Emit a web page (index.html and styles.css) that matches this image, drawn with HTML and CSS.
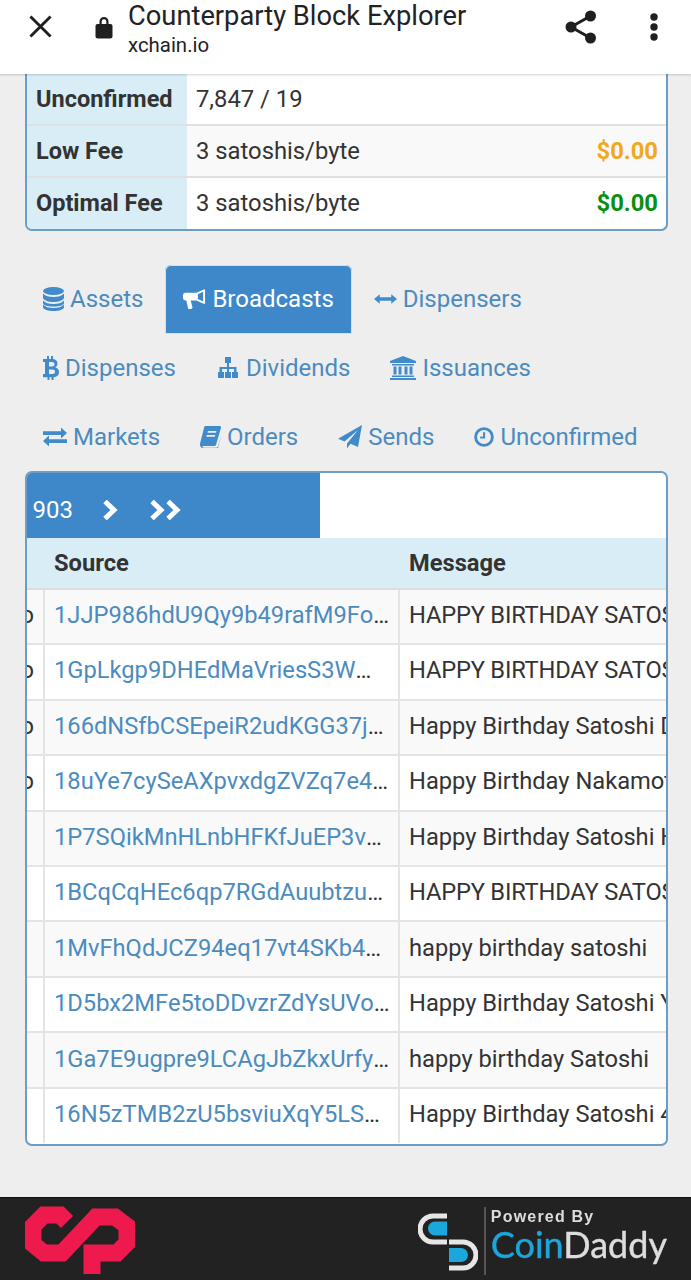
FILE: index.html
```html
<!DOCTYPE html>
<html lang="en">
<head>
<meta charset="utf-8">
<title>Counterparty Block Explorer</title>
<link rel="stylesheet" href="styles.css">
</head>
<body>
<header class="topbar">
  <svg class="ic-close" viewBox="0 0 24 24"><path d="M1.500 1.500 22.500 22.500M22.500 1.500 1.500 22.500"/></svg>
  <svg class="ic-lock" viewBox="0 0 18 24"><path d="M4.500 9V6.500a4.500 4.500 0 0 1 9 0V9h2a2 2 0 0 1 2 2v10a2.500 2.500 0 0 1-2.500 2.500H3A2.500 2.500 0 0 1 .5 21V11a2 2 0 0 1 2-2zm2.200 0h4.600V6.500a2.300 2.300 0 0 0-4.600 0z"/></svg>
  <div class="titles">
    <div class="title">Counterparty Block Explorer</div>
    <div class="subtitle">xchain.io</div>
  </div>
  <svg class="ic-share" viewBox="0 0 32 34"><path class="ln" d="M25.500 6 6 17l19.500 11"/><circle cx="25.500" cy="6" r="5.500"/><circle cx="6" cy="17" r="5.500"/><circle cx="25.500" cy="28" r="5.500"/></svg>
  <svg class="ic-dots" viewBox="0 0 8 28"><circle cx="4" cy="4" r="3.700"/><circle cx="4" cy="14" r="3.700"/><circle cx="4" cy="24" r="3.700"/></svg>
</header>

<main class="main">
  <section class="panel stats">
    <div class="stat"><div class="stat-k">Unconfirmed</div><div class="stat-v">7,847 / 19</div></div>
    <div class="stat stat-alt"><div class="stat-k">Low Fee</div><div class="stat-v">3 satoshis/byte<b class="fee fee-low">$0.00</b></div></div>
    <div class="stat"><div class="stat-k">Optimal Fee</div><div class="stat-v">3 satoshis/byte<b class="fee fee-opt">$0.00</b></div></div>
  </section>

  <nav class="tabs">
    <a class="tab"><svg class="ti" style="width:21px" viewBox="0 0 21 24"><ellipse cx="10.500" cy="4" rx="10.500" ry="4"/><path d="M0 6.500C2 9 6 10 10.500 10S19 9 21 6.500V11c-1 2.500-5.500 4-10.500 4S1 13.500 0 11zM0 13.500C2 16 6 17 10.500 17S19 16 21 13.500V16c0 2.500-5 3.500-10.500 3.500S0 18.500 0 16z"/><path d="M0 17.500C2 20 6 21 10.500 21S19 20 21 17.500V20c0 2.500-5 4-10.500 4S0 22.500 0 20z"/></svg>Assets</a>
    <a class="tab active"><svg class="ti" style="width:23px" viewBox="0 0 24 24"><path d="M23 2v15h-1.500L14 13.500H8l2 7.500-1.500 1.500H5.500L3.500 13.500H2.500a2.500 2.500 0 0 1-2.500-2.500V8a2.500 2.500 0 0 1 2.500-2.500H14L21.500 2zM15.500 7v5l5.500 2.500V4.500z" fill-rule="evenodd"/></svg>Broadcasts</a>
    <a class="tab"><svg class="ti" style="width:23px" viewBox="0 0 24 24"><path d="M0 12 6 7v3.300h12V7l6 5-6 5v-3.300H6V17z"/></svg>Dispensers</a>
    <a class="tab"><svg class="ti" style="width:16px" viewBox="0 0 16 24"><path fill-rule="evenodd" d="M4 0h2v3h2V0h2v3c3 .3 4.500 2 4.500 4.500 0 2-1 3.300-2.300 3.800C14.500 12 16 13.500 16 16c0 3-2 5-5.500 5.200V24h-2v-2.800h-2V24h-2v-2.800H0V18h2V6H0V3h4zM6 6v4.500h3c1.500 0 2.500-1 2.500-2.300S10.500 6 9 6zm0 7.500V18h3.500c1.600 0 2.500-1 2.500-2.300s-1-2.200-2.500-2.200z"/></svg>Dispenses</a>
    <a class="tab"><svg class="ti" style="width:24px" viewBox="0 0 24 24"><path d="M9 1h6v6h-2v4h7.500v5H22v6h-6v-6h2v-3h-5v3h2v6H9v-6h2v-3H6v3h2v6H2v-6h1.500v-5H11V7H9z"/></svg>Dividends</a>
    <a class="tab"><svg class="ti" style="width:26px" viewBox="0 0 26 24"><path d="M13 0 26 5v2H0V5zM2 8h22v1.500H2zM3.500 10.500h3v8h-3zM8.500 10.500h3v8h-3zM14.500 10.500h3v8h-3zM19.500 10.500h3v8h-3zM2 19.500h22V21H2zM0 22h26v2H0z"/></svg>Issuances</a>
    <a class="tab"><svg class="ti" style="width:24px" viewBox="0 0 24 24"><path d="M0 6.200h18V2.500L24 8l-6 5.500V10H0zM24 14.200H6v-3.700L0 16l6 5.500V18h18z"/></svg>Markets</a>
    <a class="tab"><svg class="ti" style="width:21px" viewBox="0 0 21 24"><path fill-rule="evenodd" d="M5 1h15c1 0 1.300.8 1 1.800l-4.800 16.400c-.4 1.300-1 1.800-2.500 1.800H3.500c-.8 0-1.200.5-1 1 .2.500.7.800 1.500.8h12.500c.8 0 1.200-.4 1.500-1.200L22 7l-4 16H3C1 23 0 21.500 0 19.500 0 19 .1 18 .3 17.500L4 3c.2-1 .5-2 1-2zM8 6l-.5 1.800h8.500L16.500 6zM6.800 10l-.5 1.800h8.500l.5-1.800z"/></svg>Orders</a>
    <a class="tab"><svg class="ti" style="width:24px" viewBox="0 0 24 24"><path d="M24 0 20 22l-7.500-3.300L9 23.500V18.500L20 5 6.500 16.500 0 13.800z"/></svg>Sends</a>
    <a class="tab"><svg class="ti" style="width:20px" viewBox="0 0 21 24"><circle cx="10.500" cy="12" r="8.800" fill="none" stroke="currentColor" stroke-width="3"/><path d="M9.500 7h2.200v6.500H6.500v-2h3z"/></svg>Unconfirmed</a>
  </nav>

  <section class="panel txs">
    <div class="scroller">
      <div class="pager">
        <span>of 903</span>
        <svg class="chev" viewBox="0 0 16 20"><path d="M3 1.500l9 8.500-9 8.500"/></svg>
        <svg class="chev2" viewBox="0 0 32 20"><path d="M3 1.500l9 8.500-9 8.500M19 1.500l9 8.500-9 8.500"/></svg>
      </div>
      <table class="grid">
        <thead><tr><th></th><th>Source</th><th>Message</th></tr></thead>
        <tbody>
          <tr><td class="c0">no</td><td class="src"><a>1JJP986hdU9Qy9b49rafM9FoWmQPqCnNxr</a></td><td class="caps">HAPPY BIRTHDAY SATOSHI</td></tr>
          <tr><td class="c0">no</td><td class="src"><a>1GpLkgp9DHEdMaVriesS3WmKqPbNzTeRty</a></td><td class="caps">HAPPY BIRTHDAY SATOSHI</td></tr>
          <tr><td class="c0">no</td><td class="src"><a>166dNSfbCSEpeiR2udKGG37jHkTnWqLmXz</a></td><td>Happy Birthday Satoshi Dear</td></tr>
          <tr><td class="c0">no</td><td class="src"><a>18uYe7cySeAXpvxdgZVZq7e4KwPmNbTrQs</a></td><td>Happy Birthday Nakamoto</td></tr>
          <tr><td class="c0"></td><td class="src"><a>1P7SQikMnHLnbHFKfJuEP3vWqTzYdGmRcx</a></td><td>Happy Birthday Satoshi Hi</td></tr>
          <tr><td class="c0"></td><td class="src"><a>1BCqCqHEc6qp7RGdAuubtzuMnKwVxLpYfT</a></td><td class="caps">HAPPY BIRTHDAY SATOSHI</td></tr>
          <tr><td class="c0"></td><td class="src"><a>1MvFhQdJCZ94eq17vt4SKb4NpRwTyXmLcG</a></td><td>happy birthday satoshi</td></tr>
          <tr><td class="c0"></td><td class="src"><a>1D5bx2MFe5toDDvzrZdYsUVoKpQwTnLmHc</a></td><td>Happy Birthday Satoshi Yes</td></tr>
          <tr><td class="c0"></td><td class="src"><a>1Ga7E9ugpre9LCAgJbZkxUrfyWnTqPmRdK</a></td><td>happy birthday Satoshi</td></tr>
          <tr><td class="c0"></td><td class="src"><a>16N5zTMB2zU5bsviuXqY5LSKfWdPnGmRtH</a></td><td>Happy Birthday Satoshi 40</td></tr>
        </tbody>
      </table>
    </div>
  </section>
</main>

<footer class="footer">
  <svg class="logo-cp" viewBox="0 0 110 68"><path d="M42 16 35 9H19L8 20V38L19 47H37L71 11H90L102 20V37L92 47H67V68"/></svg>
  <div class="logo-cd">
    <svg class="cd-mark" viewBox="0 0 60 58"><path class="cd-w" d="M29 3H15a13 13 0 0 0 0 26h14M31 29h14a13 13 0 0 1 0 26H31"/><path class="cd-b" d="M10 15.500a7 7 0 0 1 7-7h12v14H17a7 7 0 0 1-7-7zM31 35h12a7 7 0 0 1 0 14H31z"/></svg>
    <span class="cd-bar"></span>
    <div class="cd-text">
      <div class="cd-pow">Powered By</div>
      <div class="cd-name"><span class="cd-coin">Coin</span>Daddy</div>
    </div>
  </div>
</footer>
</body>
</html>
```
FILE: styles.css
```css
* { box-sizing: border-box; }
html, body { margin: 0; padding: 0; }
body {
  width: 691px;
  height: 1280px;
  overflow: hidden;
  display: flex;
  flex-direction: column;
  background: #eee;
  color: #333;
  font-family: Roboto, "Liberation Sans", sans-serif;
  font-size: 24px;
}

/* top browser bar */
.topbar {
  flex: none;
  height: 74px;
  background: #fff;
  display: flex;
  align-items: center;
  padding: 0 0 22px 29px;
  box-shadow: 0 1px 2px rgba(0,0,0,.18);
  position: relative;
  z-index: 2;
}
.ic-close { width: 23px; height: 23px; fill: none; stroke: #1f1f1f; stroke-width: 3; margin-right: 43px; margin-top: 1px; }
.ic-lock { width: 18px; height: 24px; fill: #1f1f1f; margin-right: 15px; margin-top: 1px; }
.titles { flex: 1; color: #222; margin-top: 6px; }
.title { font-size: 27.300px; line-height: 30px; height: 31px; }
.subtitle { font-size: 20.400px; line-height: 26px; }
.ic-share { width: 32px; height: 34px; fill: #1f1f1f; margin-right: 53px; margin-top: 1px; }
.ic-share .ln { fill: none; stroke: #1f1f1f; stroke-width: 3; }
.ic-dots { width: 8px; height: 28px; fill: #1f1f1f; margin-right: 33px; margin-top: 1px; }

.main { flex: 1; padding: 0 23px 0 25px; }

.panel {
  background: #fff;
  border: 2px solid #6c9dc2;
  border-radius: 7px;
}

/* stats table */
.stats {
  height: 157px;
  border-top: 0;
  border-top-left-radius: 0;
  border-top-right-radius: 0;
  margin-bottom: 34px;
  overflow: hidden;
}
.stat { display: flex; height: 52px; border-bottom: 2px solid #e0e0e0; }
.stat:last-child { border-bottom: 0; }
.stat-alt { background: #f9f9f9; }
.stat-k {
  width: 160px;
  flex: none;
  background: #d9edf7;
  font-weight: 700;
  font-size: 23.500px;
  padding-left: 9px;
  line-height: 50px;
  color: #333;
}
.stat-v { flex: 1; padding: 0 8px 0 9px; line-height: 50px; display: flex; justify-content: space-between; font-size: 23.800px; }
.fee { font-weight: 700; }
.fee-low { color: #f0a81e; }
.fee-opt { color: #0a8f10; }

/* tabs */
.tabs { display: flex; flex-wrap: wrap; height: 206px; }
.tab {
  height: 68.670px;
  display: flex;
  align-items: center;
  padding: 0 18px;
  margin-right: 4px;
  color: #4b8bbe;
  white-space: nowrap;
  border-radius: 6px 6px 0 0;
}
.ti { height: 24px; fill: #428bca; margin-right: 6px; flex: none; color: #428bca; }
.tab.active { background: #3e87c9; color: #fff; box-shadow: 0 0 0 1px #cfe2f1 inset; }
.tab.active .ti { fill: #fff; }

/* tx table */
.txs { height: 675px; }
.scroller { overflow: hidden; height: 100%; border-radius: 5px; }
.pager {
  margin-left: -60px;
  width: 353px;
  height: 65px;
  padding: 9px 139px 0 0;
  background: #3e87c9;
  color: #fff;
  display: flex;
  align-items: center;
  justify-content: flex-end;
}
.chev, .chev2 { height: 20px; fill: none; stroke: #fff; stroke-width: 5; flex: none; }
.chev { width: 16px; margin-left: 29px; }
.chev2 { width: 32px; margin-left: 31px; }
.grid {
  margin-left: -60px;
  width: 933px;
  table-layout: fixed;
  border-collapse: collapse;
  font-size: 23.700px;
}
.grid th {
  height: 50.800px;
  background: #d9edf7;
  text-align: left;
  font-weight: 700;
  padding: 0 9px 0 10px;
  border-bottom: 2px solid #ddd;
}
.grid th:nth-child(1), .grid td:nth-child(1) { width: 77px; }
.grid th:nth-child(2), .grid td:nth-child(2) { width: 355px; }
.grid td {
  height: 55.440px;
  padding: 0 9px 3px;
  border-top: 2px solid #e4e4e4;
  border-left: 2px solid #e4e4e4;
  white-space: nowrap;
  overflow: hidden;
}
.grid td:first-child { border-left: 0; text-align: right; }
.grid tbody tr:first-child td { border-top: 0; }
.grid tbody tr:nth-child(odd) { background: #f9f9f9; }
.grid td.src { text-overflow: ellipsis; padding-left: 9px; padding-right: 8px; }
.grid td.caps { letter-spacing: -.2px; }
.src a { color: #4b8bbe; }

/* footer */
.footer {
  flex: none;
  height: 83px;
  background: #222;
  border-top: 1px solid #111;
  display: flex;
  justify-content: space-between;
  align-items: flex-start;
  padding: 8px 24px 0 25px;
}
.logo-cp { width: 110px; height: 68px; fill: none; stroke: #ee1a4e; stroke-width: 17; }
.logo-cd { display: flex; align-items: flex-start; margin-top: 1px; }
.cd-mark { width: 60px; height: 58px; margin-top: 6px; }
.cd-w { fill: none; stroke: #e6e6e6; stroke-width: 5; }
.cd-b { fill: #1ba6dc; }
.cd-bar { width: 2px; height: 68px; background: #555; margin: 0 5px 0 6px; }
.cd-text { filter: blur(.4px); }
.cd-pow { font-family: "Liberation Sans", sans-serif; font-weight: 700; font-size: 16px; line-height: 20px; letter-spacing: 1.200px; color: #ddd; }
.cd-name { font-family: Lato, sans-serif; font-size: 36px; line-height: 34px; color: #ddd; -webkit-text-stroke: .4px currentColor; }
.cd-coin { color: #1ba6dc; }
```
